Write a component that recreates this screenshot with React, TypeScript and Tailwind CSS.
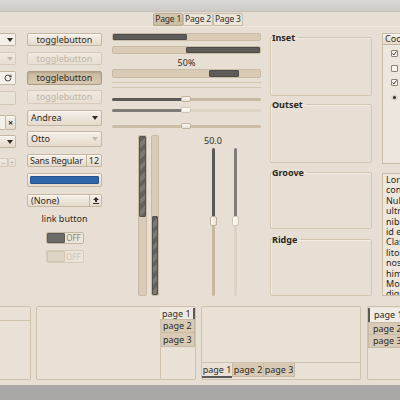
import { RotateCw } from "lucide-react";

const btn =
  "border border-[#c4b6a1] rounded-[2px] bg-linear-to-b from-[#f5f0e9] to-[#e5dbcc] shadow-[inset_0_1px_0_#fbf8f3]";
const btnOff =
  "border border-[#d6cbbb] rounded-[2px] bg-linear-to-b from-[#efe9e0] to-[#e7dfd3]";

const Arrow = ({ faded }: { faded?: boolean }) => (
  <svg width="6" height="4" viewBox="0 0 6 4">
    <path d="M0 0h6L3 4z" fill={faded ? "#c6baa8" : "#2f2c29"} />
  </svg>
);

const Check = () => (
  <div className="w-[7px] h-[7px] border border-[#8d8478] bg-[#f7f4ef] rounded-[1px] flex items-center justify-center">
    <svg width="5" height="5" viewBox="0 0 5 5">
      <path d="M0.5 2.5l1.3 1.5L4.5 0.5" stroke="#3a3632" strokeWidth="1" fill="none" />
    </svg>
  </div>
);

const lorem = [
  "Lorem ipsum dolor sit amet,",
  "consectetur adipiscing elit.",
  "Nullam fringilla, est ut feugiat",
  "ultrices, elit lacus ultricies",
  "nibh, id commodo tortor nisi",
  "id elit.",
  "Class aptent taciti sociosqu ad",
  "litora torquent per conubia",
  "nostra, per inceptos",
  "himenaeos.",
  "Morbi vel elit erat. Maecenas",
  "dignissim, dui et pharetra",
];

const stripes =
  "bg-[repeating-linear-gradient(135deg,#64625e_0px,#64625e_4px,#7b7974_4px,#7b7974_8px)]";

function LeftColumn() {
  return (
    <div className="w-[16px] shrink-0 flex flex-col pt-[6px]">
      <div className="h-[13px] border border-l-0 border-[#c4b6a1] rounded-r-[2px] bg-[#f3eee7] flex items-center justify-end pr-[2px]">
        <Arrow />
      </div>
      <div className={`${btnOff} border-l-0 rounded-l-none mt-[6px] h-[13px] flex items-center justify-end pr-[2px]`}>
        <Arrow faded />
      </div>
      <div className="mt-[6px] h-[14px] border border-l-0 border-[#c4b6a1] rounded-r-[2px] bg-[#f4f0ea] flex items-center justify-end pr-[3px]">
        <RotateCw size={8} strokeWidth={2.5} color="#2f2c29" />
      </div>
      <div className="mt-[6px] h-[14px] border border-l-0 border-[#d3c7b6] rounded-r-[2px] bg-[#e9e2d7]" />
      <div className="mt-[10px] h-[15px] flex">
        <div className="w-[5px] border-y border-[#c4b6a1] bg-[#f4f0ea]" />
        <div className={`${btn} flex-1 flex items-center justify-center text-[9px] font-bold leading-none`}>×</div>
      </div>
      <div className={`${btn} border-l-0 rounded-l-none mt-[5px] h-[13px] flex items-center justify-end pr-[2px]`}>
        <Arrow />
      </div>
      <div className="mt-[10px] h-[9px] flex text-[#b9ad9c] leading-none text-[8px]">
        <div className={`${btnOff} border-l-0 rounded-none w-[8px] flex items-center justify-center`}>−</div>
        <div className={`${btnOff} w-[8px] flex items-center justify-center`}>+</div>
      </div>
    </div>
  );
}

function ButtonColumn() {
  return (
    <div className="w-[75px] shrink-0 ml-[11px] flex flex-col pt-[6px] text-[9px]">
      <div className={`${btn} h-[13px] flex items-center justify-center`}>togglebutton</div>
      <div className={`${btnOff} mt-[6px] h-[13px] flex items-center justify-center text-[#c2b6a4]`}>togglebutton</div>
      <div className="mt-[6px] h-[14px] flex items-center justify-center border border-[#ad9d85] rounded-[2px] bg-linear-to-b from-[#c9b9a0] to-[#d7c9b3] shadow-[inset_0_1px_2px_#b3a289]">
        togglebutton
      </div>
      <div className={`${btnOff} mt-[5px] h-[14px] flex items-center justify-center text-[#c2b6a4]`}>togglebutton</div>
      <div className={`${btn} mt-[6px] h-[16px] flex items-center justify-between px-[3px]`}>
        <span>Andrea</span>
        <Arrow />
      </div>
      <div className={`${btn} mt-[5px] h-[16px] flex items-center justify-between px-[3px]`}>
        <span>Otto</span>
        <Arrow faded />
      </div>
      <div className={`${btn} mt-[7px] h-[13px] flex items-center`}>
        <span className="flex-1 pl-[2px] tracking-[-0.2px]">Sans Regular</span>
        <span className="w-[15px] h-full border-l border-[#c4b6a1] flex items-center justify-center">12</span>
      </div>
      <div className={`${btn} mt-[6px] h-[14px] p-[2px]`}>
        <div className="h-full bg-[#2f64a7] rounded-[1px] border border-[#26548f]" />
      </div>
      <div className={`${btn} mt-[7px] h-[13px] flex items-center`}>
        <span className="flex-1 pl-[3px]">(None)</span>
        <span className="w-[12px] h-full border-l border-[#c4b6a1] flex items-center justify-center">
          <svg width="6" height="7" viewBox="0 0 6 7">
            <path d="M3 0L6 3H4V5H2V3H0z" fill="#2f2c29" />
            <rect x="0" y="6" width="6" height="1" fill="#2f2c29" />
          </svg>
        </span>
      </div>
      <div className="mt-[5px] h-[13px] flex items-center justify-center">link button</div>
      <div className="mt-[7px] h-[12px] w-[38px] mx-auto flex border border-[#c4b6a1] rounded-[2px] bg-[#ece5da]">
        <div className="w-[18px] bg-[#6c6b68] rounded-[1px] border border-[#5a5956]" />
        <div className="flex-1 flex items-center justify-center text-[8px] text-[#8b8175]">OFF</div>
      </div>
      <div className="mt-[6px] h-[13px] w-[38px] mx-auto flex border border-[#d6cbbb] rounded-[2px] bg-[#ebe4d9]">
        <div className="w-[18px] bg-[#ddd4c6] rounded-[1px] border border-[#d0c4b2]" />
        <div className="flex-1 flex items-center justify-center text-[8px] text-[#cdc2b2]">OFF</div>
      </div>
    </div>
  );
}

const trough = "border border-[#c9bba6] rounded-[2px] bg-[#d9cbb6]";
const handleH = "w-[10px] h-[6px] rounded-[2px] border border-[#bfb19c] bg-linear-to-b from-[#fbf9f5] to-[#e9e1d5]";
const handleV = "w-[7px] h-[10px] rounded-[2px] border border-[#bfb19c] bg-linear-to-r from-[#fbf9f5] to-[#e9e1d5]";

function RangeColumn() {
  return (
    <div className="w-[149px] shrink-0 ml-[10px] flex flex-col pt-[6px]">
      <div className={`${trough} h-[8px] flex`}>
        <div className="w-[74px] bg-[#5d5c59] border border-[#4c4b48] rounded-[1px]" />
      </div>
      <div className={`${trough} mt-[5px] h-[8px] flex justify-end`}>
        <div className="w-[74px] bg-[#5d5c59] border border-[#4c4b48] rounded-[1px]" />
      </div>
      <div className="mt-[3px] h-[12px] flex items-center justify-center text-[9px]">50%</div>
      <div className={`${trough} h-[9px] flex pl-[96px]`}>
        <div className="w-[30px] bg-[#5d5c59] border border-[#4c4b48] rounded-[1px]" />
      </div>
      <div className="mt-[4px] h-[1px] bg-[#d2c5b2]" />
      <div className="mt-[4px] h-[1px] bg-[#d2c5b2]" />
      <div className="mt-[8px] h-[6px] flex items-center">
        <div className="w-[69px] h-[3px] bg-[#5a5956] rounded-l-[2px]" />
        <div className={handleH} />
        <div className="flex-1 h-[3px] bg-[#c8b9a3] rounded-r-[2px]" />
      </div>
      <div className="mt-[5px] h-[6px] flex items-center">
        <div className="w-[69px] h-[3px] bg-[#7d7c79] rounded-l-[2px]" />
        <div className={`${handleH} from-white to-[#f1ece5] border-[#d2c7b7]`} />
        <div className="flex-1 h-[3px] bg-[#ddd3c5] rounded-r-[2px]" />
      </div>
      <div className="mt-[10px] h-[6px] flex items-center">
        <div className="w-[69px] h-[3px] bg-[#cbbda8] rounded-l-[2px]" />
        <div className={handleH} />
        <div className="flex-1 h-[3px] bg-[#cbbda8] rounded-r-[2px]" />
      </div>
      <div className="mt-[6px] h-[161px] flex">
        <div className={`ml-[26px] w-[9px] flex flex-col ${trough}`}>
          <div className={`h-[81px] ${stripes} rounded-[1px] border border-[#55534f]`} />
        </div>
        <div className={`ml-[4px] w-[8px] flex flex-col ${trough}`}>
          <div className="h-[80px]" />
          <div className={`flex-1 ${stripes} rounded-[1px] border border-[#55534f]`} />
        </div>
        <div className="ml-[44px] w-[20px] flex flex-col items-center">
          <div className="h-[10px] flex items-center text-[9px] leading-none">50.0</div>
          <div className="mt-[3px] w-[3px] h-[68px] bg-[#5a5956] rounded-t-[2px]" />
          <div className={handleV} />
          <div className="w-[3px] flex-1 bg-[#c6b7a0] rounded-b-[2px]" />
        </div>
        <div className="ml-[2px] w-[20px] flex flex-col items-center pt-[13px]">
          <div className="w-[3px] h-[68px] bg-[#7d7c79] rounded-t-[2px]" />
          <div className={`${handleV} from-white to-[#f1ece5] border-[#d2c7b7]`} />
          <div className="w-[3px] flex-1 bg-[#ddd3c5] rounded-b-[2px]" />
        </div>
      </div>
    </div>
  );
}

function Frame({ label, className }: { label: string; className: string }) {
  return (
    <fieldset
      className={`border border-[#d3c6b3] rounded-[2px] shadow-[inset_1px_1px_0_#f1ece4] ${className}`}
    >
      <legend className="ml-[1px] pr-[3px] font-bold text-[9px] leading-[11px] text-[#2a2622]">{label}</legend>
    </fieldset>
  );
}

function FrameColumn() {
  return (
    <div className="w-[102px] shrink-0 ml-[9px] flex flex-col pt-[5px]">
      <Frame label="Inset" className="h-[64px]" />
      <Frame label="Outset" className="mt-[3px] h-[64px]" />
      <Frame label="Groove" className="mt-[4px] h-[62px]" />
      <Frame label="Ridge" className="mt-[5px] h-[62px]" />
    </div>
  );
}

function ListColumn() {
  return (
    <div className="ml-[10px] w-[40px] shrink-0 flex flex-col pt-[6px]">
      <div className="h-[131px] border border-[#c9bda9] bg-[#ece6dc] flex flex-col">
        <div className={`${btn} h-[11px] flex items-center pl-[2px] text-[9px] rounded-none border-t-0 border-l-0`}>Coo</div>
        <div className="pl-[8px] flex flex-col">
          <div className="mt-[5px]"><Check /></div>
          <div className="mt-[8px] w-[7px] h-[7px] border border-[#8d8478] bg-[#f7f4ef] rounded-[1px]" />
          <div className="mt-[7px]"><Check /></div>
          <div className="mt-[8px] w-[7px] h-[7px] flex items-center justify-center">
            <div className="w-[3px] h-[3px] rounded-full bg-[#2f2c29] shadow-[0_0_0_1.5px_#d8d2c8]" />
          </div>
        </div>
      </div>
      <div className="mt-[9px] h-[123px] border border-[#c9bda9] bg-[#ede7de] overflow-hidden pl-[3px] pt-[1px] text-[9px] leading-[10.4px] text-[#2a2622]">
        {lorem.map((l) => (
          <div key={l} className="whitespace-nowrap">{l}</div>
        ))}
      </div>
    </div>
  );
}

const nb = "border border-[#cfc2ae] bg-[#e9e1d5] rounded-[2px]";
const tabOff = "bg-[#d8cab5] border border-[#c7b9a4] text-[#2f2b27]";
const pageTab = "h-[13px] px-[1px] flex items-center justify-center rounded-t-[2px] text-[8.5px] tracking-[-0.2px]";

export default function App() {
  return (
    <div className="w-[400px] h-[400px] overflow-hidden whitespace-nowrap bg-[#e7dfd3] flex flex-col font-['Noto_Sans','DejaVu_Sans',sans-serif] text-[9px] text-[#2f2b27]">
      <div className="h-[12px] shrink-0 bg-linear-to-b from-[#d9d8d5] to-[#cdcbc7] border-b border-[#c4beb4]" />
      <div className="h-[14px] shrink-0 flex justify-center pr-[4px] pt-[1px]">
        <div className={`${pageTab} bg-linear-to-b from-[#d6c8b1] to-[#cbbca4] border border-[#b9aa93]`}>Page 1</div>
        <div className={`${pageTab} bg-[#ece5da] border border-[#c9bca8]`}>Page 2</div>
        <div className={`${pageTab} bg-[#ece5da] border border-[#c9bca8]`}>Page 3</div>
      </div>
      <div className="h-[274px] shrink-0 flex border-t border-[#efe9e0]">
        <LeftColumn />
        <ButtonColumn />
        <RangeColumn />
        <FrameColumn />
        <ListColumn />
      </div>
      <div className="mt-[6px] h-[74px] shrink-0 flex gap-[5px] text-[9px]">
        <div className={`${nb} w-[31px] shrink-0 border-l-0 rounded-l-none flex flex-col`}>
          <div className="h-[14px] border-b border-[#cfc2ae]" />
        </div>
        <div className={`${nb} w-[160px] shrink-0 flex`}>
          <div className="flex-1" />
          <div className="w-[35px] flex flex-col pt-[1px]">
            <div className="h-[11px] flex items-center pl-[2px] border-r-2 border-[#5a5956] bg-[#efe9e0]">page 1</div>
            <div className="flex-1 border-l border-[#cfc2ae] flex flex-col">
              <div className={`${tabOff} border-l-0 h-[14px] flex items-center pl-[2px]`}>page 2</div>
              <div className={`${tabOff} border-l-0 border-t-0 h-[14px] flex items-center pl-[2px]`}>page 3</div>
            </div>
          </div>
        </div>
        <div className={`${nb} w-[160px] shrink-0 flex flex-col`}>
          <div className="flex-1 border-b border-[#cfc2ae]" />
          <div className="h-[16px] flex items-start">
            <div className="w-[30px] h-[15px] flex items-center justify-center border-b-2 border-[#5a5956]">page 1</div>
            <div className={`${tabOff} border-t-0 w-[32px] h-[14px] flex items-center justify-center`}>page 2</div>
            <div className={`${tabOff} border-t-0 border-l-0 w-[31px] h-[14px] flex items-center justify-center`}>page 3</div>
          </div>
        </div>
        <div className={`${nb} ml-[1px] w-[40px] shrink-0 border-r-0 rounded-r-none flex flex-col pt-[1px] overflow-hidden`}>
          <div className="h-[14px] flex items-center pl-[4px] border-l-2 border-[#5a5956] bg-[#f1ece4]">page 1</div>
          <div className={`${tabOff} border-r-0 h-[13px] flex items-center pl-[4px]`}>page 2</div>
          <div className={`${tabOff} border-r-0 border-t-0 h-[13px] flex items-center pl-[4px]`}>page 3</div>
        </div>
      </div>
      <div className="h-[5px] shrink-0" />
      <div className="h-[15px] shrink-0 bg-[#a9a8a6]" />
    </div>
  );
}
